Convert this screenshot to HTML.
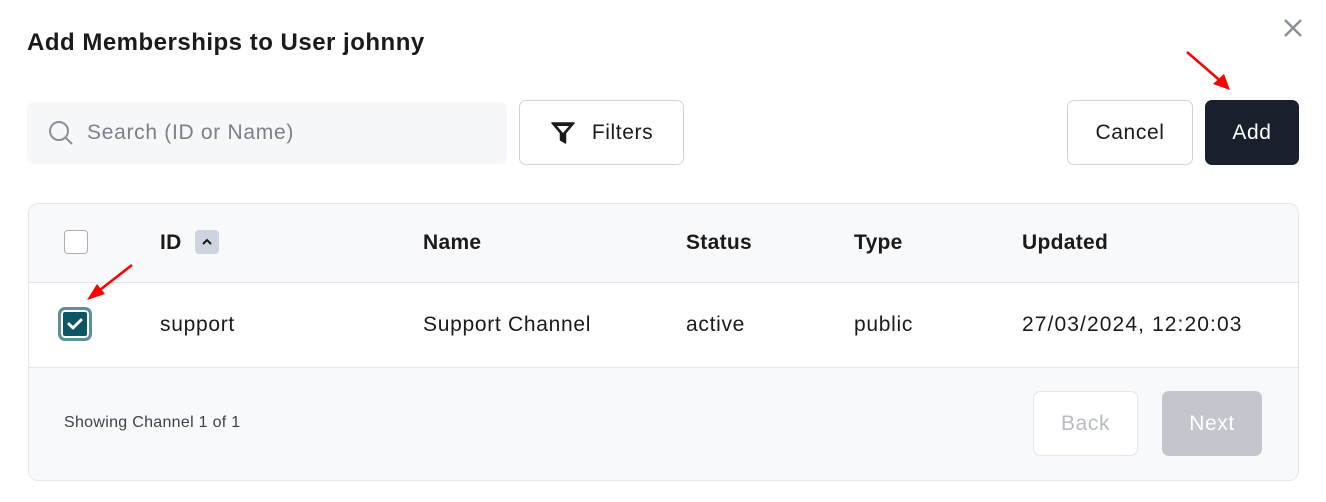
<!DOCTYPE html>
<html><head><style>
body{margin:0;width:1326px;height:502px;background:#fff;font-family:"Liberation Sans",sans-serif;color:#1a1a1a;position:relative;overflow:hidden}
.a{position:absolute}
.btn{position:absolute;box-sizing:border-box;border-radius:7px;display:flex;align-items:center;justify-content:center;font-size:21px;letter-spacing:0.6px}
.t{position:absolute;font-size:21px;letter-spacing:0.7px}
</style></head><body>
<div class="a" style="left:27px;top:29px;font-size:24px;font-weight:bold;letter-spacing:0.5px">Add Memberships to User johnny</div>
<svg class="a" style="left:1283px;top:18px" width="20" height="20"><path d="M2 2L18 18M18 2L2 18" stroke="#8a8f99" stroke-width="2.4"/></svg>
<div class="a" style="left:27px;top:102px;width:480px;height:62px;background:#f6f7f8;border-radius:7px"></div>
<svg class="a" style="left:47px;top:119px" width="28" height="28"><circle cx="12" cy="12" r="9" fill="none" stroke="#8a8f99" stroke-width="2"/><path d="M19 19L25 25" stroke="#8a8f99" stroke-width="2"/></svg>
<div class="t" style="left:87px;top:121px;color:#7b808a">Search (ID or Name)</div>
<div class="btn" style="left:519px;top:100px;width:165px;height:65px;border:1px solid #cfd4dc">
<svg width="26" height="26" style="margin-right:16px"><path d="M2 3H24L15.5 13V23L10.5 20V13Z" fill="#1a1a1a" stroke="#1a1a1a" stroke-width="1.5" stroke-linejoin="round"/><path d="M7 6H19L13 13Z" fill="#fff"/></svg>Filters</div>
<div class="btn" style="left:1067px;top:100px;width:126px;height:65px;border:1px solid #cfd4dc">Cancel</div>
<div class="btn" style="left:1205px;top:100px;width:94px;height:65px;background:#1a1f2e;color:#fff">Add</div>
<div class="a" style="left:28px;top:203px;width:1269px;height:276px;border:1px solid #e2e6ee;border-radius:10px;overflow:hidden;box-sizing:content-box">
<div class="a" style="left:0;top:0;width:100%;height:78px;background:#f8f9fb;border-bottom:1px solid #e2e6ee"></div>
<div class="a" style="left:0;top:163px;width:100%;height:113px;background:#f8f9fb;border-top:1px solid #e2e6ee"></div>
</div>
<div class="a" style="left:64px;top:230px;width:22px;height:22px;border:1px solid #a9adb5;border-radius:4px;background:#fff"></div>
<div class="t" style="left:160px;top:231px;font-weight:bold;letter-spacing:0.3px">ID</div>
<div class="a" style="left:195px;top:230px;width:24px;height:24px;background:#cdd4df;border-radius:4px"></div>
<svg class="a" style="left:195px;top:230px" width="24" height="24"><path d="M8 14L12 10L16 14" fill="none" stroke="#1a1a1a" stroke-width="2"/></svg>
<div class="t" style="left:423px;top:231px;font-weight:bold;letter-spacing:0.3px">Name</div>
<div class="t" style="left:686px;top:231px;font-weight:bold;letter-spacing:0.3px">Status</div>
<div class="t" style="left:854px;top:231px;font-weight:bold;letter-spacing:0.3px">Type</div>
<div class="t" style="left:1022px;top:231px;font-weight:bold;letter-spacing:0.3px">Updated</div>
<div class="a" style="left:58px;top:307px;width:28px;height:28px;border:3px solid #5a9099;border-radius:7px;background:#0d5562;box-shadow:inset 0 0 0 2px #fff"></div>
<svg class="a" style="left:64px;top:313px" width="22" height="22"><path d="M5 11L9 15L17 7" fill="none" stroke="#fff" stroke-width="3" stroke-linecap="round" stroke-linejoin="round"/></svg>
<div class="t" style="left:160px;top:313px">support</div>
<div class="t" style="left:423px;top:313px">Support Channel</div>
<div class="t" style="left:686px;top:313px">active</div>
<div class="t" style="left:854px;top:313px">public</div>
<div class="t" style="left:1022px;top:313px;letter-spacing:1.1px">27/03/2024, 12:20:03</div>
<div class="a" style="left:64px;top:414px;font-size:16px;color:#3c414a;letter-spacing:0.3px">Showing Channel 1 of 1</div>
<div class="btn" style="left:1033px;top:391px;width:105px;height:65px;border:1px solid #e2e6ee;color:#b8bcc4;background:#fff">Back</div>
<div class="btn" style="left:1162px;top:391px;width:100px;height:65px;background:#c3c6cc;color:#fff">Next</div>
<svg class="a" style="left:0;top:0" width="1326" height="502">
<path d="M1187 52L1224 84" stroke="#f00" stroke-width="2.5"/><path d="M1230 90L1213 84L1224 74Z" fill="#f00"/>
<path d="M132 265L96 293" stroke="#f00" stroke-width="2.5"/><path d="M87 300L97 284L105 294Z" fill="#f00"/>
</svg>
</body></html>
